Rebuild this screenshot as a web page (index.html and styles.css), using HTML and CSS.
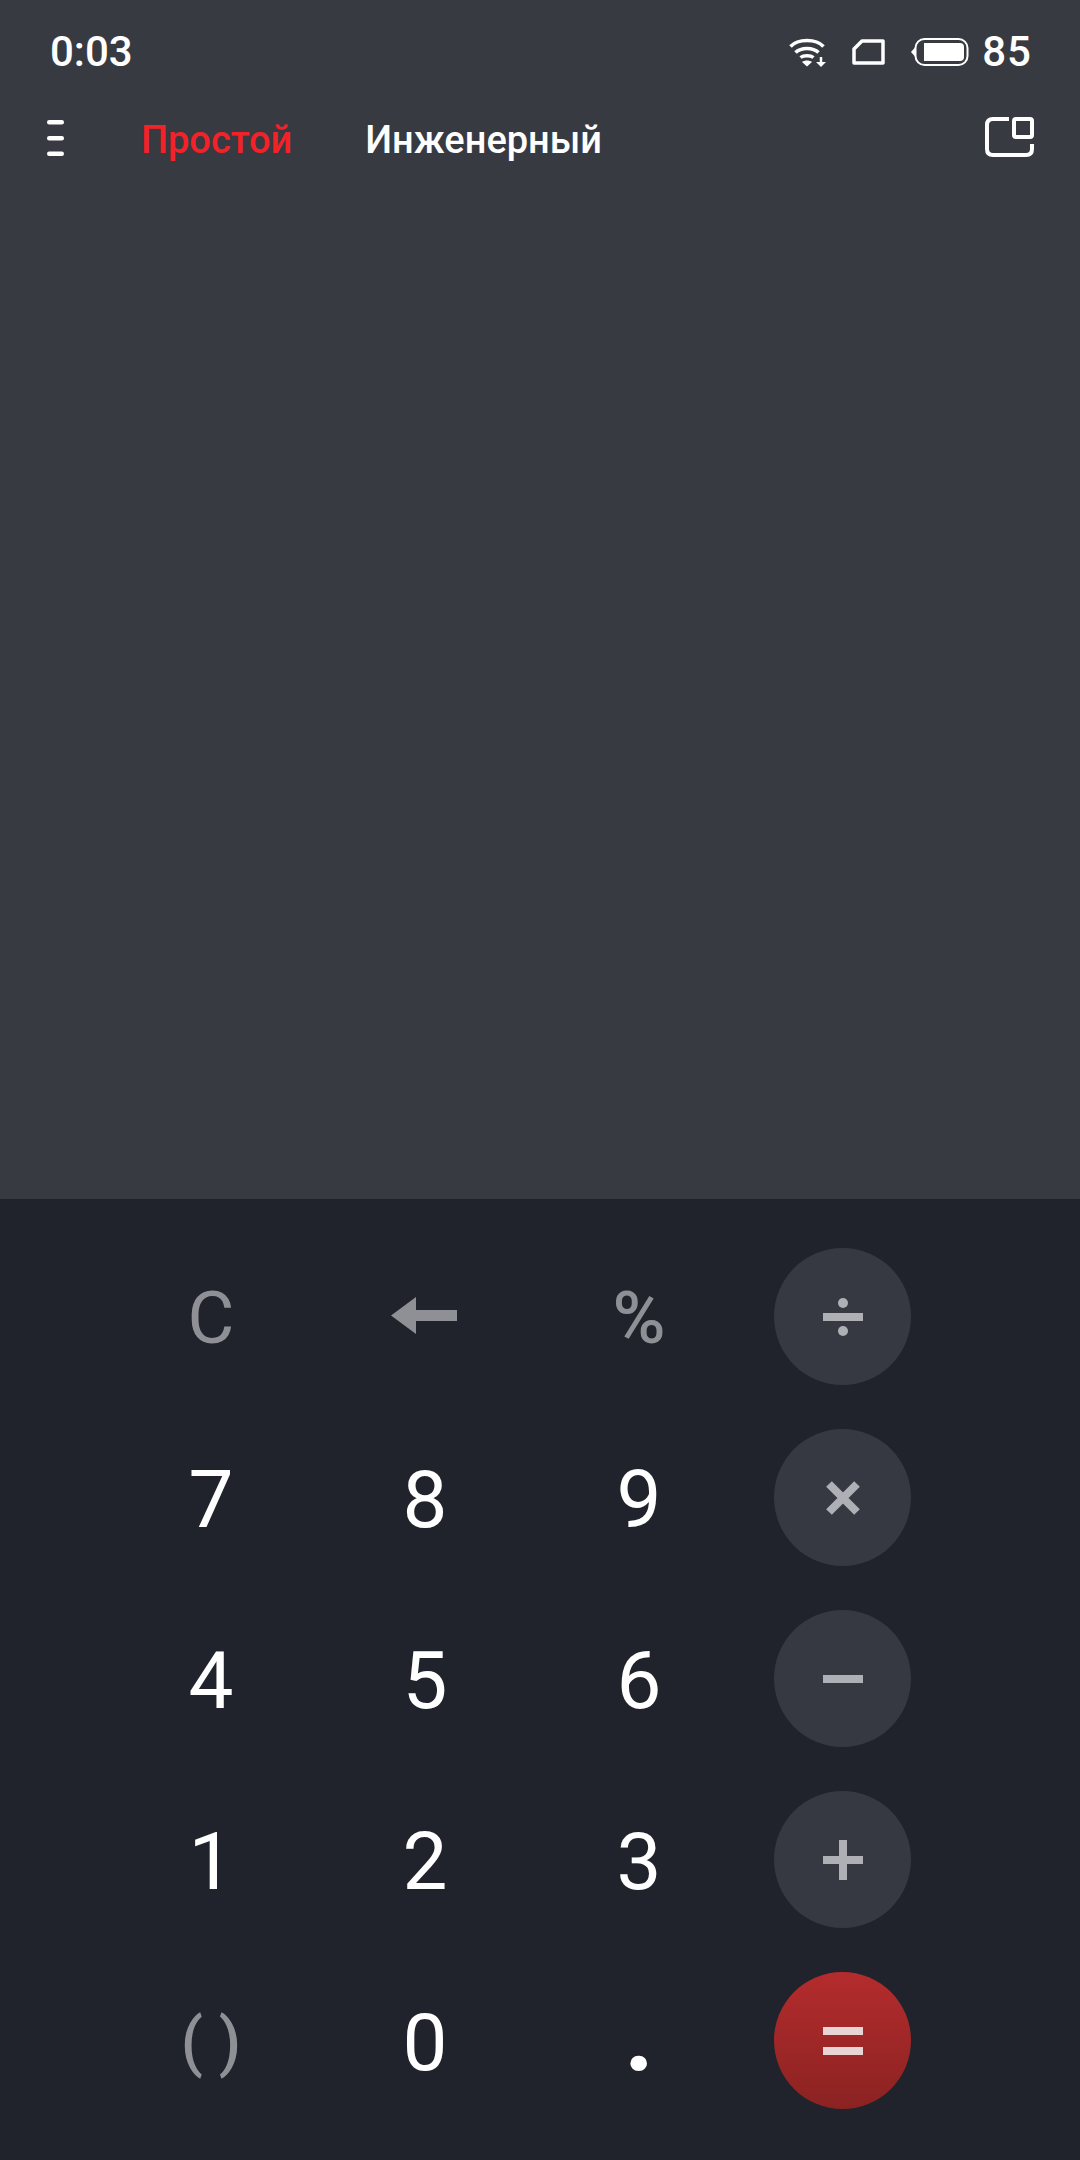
FILE: index.html
```html
<!DOCTYPE html>
<html lang="ru">
<head>
    <meta charset="UTF-8">
    <meta name="viewport" content="width=device-width, initial-scale=1.0">
    <title>Калькулятор</title>
    <link rel="stylesheet" href="styles.css">
</head>
<body>
    <div class="screen">
        <div class="display">
            <div class="status">
                <span class="time">0:03</span>
                <svg class="wifi" width="38" height="30" viewBox="0 0 38 30" fill="none" stroke="#fff" stroke-width="3.500">
                    <path d="M1.500 9.500C9 1.500 27 1.500 34.500 9.500"/>
                    <path d="M6.500 15.500C12 10 24 10 29.500 15.500"/>
                    <path d="M11.500 20.500C14.500 18 21.500 18 24.500 20.500"/>
                    <path d="M18 29.500L13 25C15.500 23 20.500 23 23 25Z" fill="#fff" stroke="none"/>
                    <path d="M32 20V26" stroke-width="2.500"/>
                    <path d="M27 25H37L32 30Z" fill="#fff" stroke="none"/>
                </svg>
                <svg class="sim" width="33" height="26" viewBox="0 0 33 26" fill="none" stroke="#fff" stroke-width="3.500">
                    <path d="M10 2H31V24H2V10Z" stroke-linejoin="round"/>
                </svg>
                <svg class="battery" width="58" height="28" viewBox="0 0 58 28">
                    <path d="M4 9.500L0 14L4 18.500Z" fill="#fff"/>
                    <rect x="4.500" y="1" width="52" height="26" rx="9" fill="none" stroke="#fff" stroke-width="2"/>
                    <path d="M13 5H49Q53 5 53 9V19Q53 23 49 23H13Z" fill="#fff"/>
                </svg>
                <span class="level">85</span>
            </div>
            <div class="tabs">
                <svg class="menu" width="17" height="36" viewBox="0 0 17 36" fill="#fff">
                    <rect y="0" width="17" height="4.500" rx="2.200"/>
                    <rect y="16" width="17" height="4.500" rx="2.200"/>
                    <rect y="31.500" width="17" height="4.500" rx="2.200"/>
                </svg>
                <span class="tab active">Простой</span>
                <span class="tab">Инженерный</span>
                <svg class="pip" width="49" height="40" viewBox="0 0 49 40" fill="none" stroke="#fff" stroke-width="4">
                    <path d="M24 2H8Q2 2 2 8V32Q2 38 8 38H41Q47 38 47 32V27"/>
                    <rect x="29" y="2" width="18" height="18" rx="2"/>
                </svg>
            </div>
        </div>
        <div class="keypad">
            <span class="key muted small">C</span>
            <span class="key muted arrow">
                <svg width="66" height="37" viewBox="0 0 66 37" fill="#8e9095"><path d="M0 18.500L25 0V13H66V24H25V37Z"/></svg>
            </span>
            <span class="key muted small percent">%</span>
            <span class="op">
                <svg width="40" height="40" viewBox="0 0 40 40" fill="#aeb0b6"><circle cx="20" cy="6" r="5"/><rect y="16" width="40" height="8"/><circle cx="20" cy="34" r="5"/></svg>
            </span>

            <span class="key">7</span>
            <span class="key">8</span>
            <span class="key">9</span>
            <span class="op">
                <svg width="40" height="40" viewBox="0 0 40 40" fill="none" stroke="#aeb0b6" stroke-width="8"><path d="M6 6L34 34M34 6L6 34"/></svg>
            </span>

            <span class="key">4</span>
            <span class="key">5</span>
            <span class="key">6</span>
            <span class="op">
                <svg width="40" height="40" viewBox="0 0 40 40" fill="#aeb0b6"><rect y="16" width="40" height="8"/></svg>
            </span>

            <span class="key">1</span>
            <span class="key">2</span>
            <span class="key">3</span>
            <span class="op">
                <svg width="40" height="40" viewBox="0 0 40 40" fill="#aeb0b6"><rect y="16" width="40" height="8"/><rect x="16" width="8" height="40"/></svg>
            </span>

            <span class="key muted parens">( )</span>
            <span class="key">0</span>
            <span class="key dot">.</span>
            <span class="op equals">
                <svg width="40" height="40" viewBox="0 0 40 40" fill="#e8d4d4"><rect y="6" width="40" height="8"/><rect y="26" width="40" height="8"/></svg>
            </span>
        </div>
    </div>
</body>
</html>
```

FILE: styles.css
```css
*{
    box-sizing: border-box;
}
body{
    margin: 0;
    background-color: #20232b;
    font-family: Roboto, "Liberation Sans", sans-serif;
    color: white;
}
.screen{
    width: 1080px;
    height: 2160px;
    display: flex;
    flex-direction: column;
    overflow: hidden;
}
.display{
    height: 1199px;
    background-color: #383a42;
}
.status{
    display: flex;
    align-items: center;
    height: 103px;
    padding-left: 50px;
}
.time{
    font-size: 42px;
    font-weight: 500;
    margin-right: auto;
}
.wifi{
    margin-right: 25px;
}
.sim{
    margin-right: 26px;
}
.battery{
    margin-right: 13px;
}
.level{
    font-size: 42px;
    font-weight: 500;
    margin-right: 48px;
    letter-spacing: 1px;
}
.tabs{
    display: flex;
    align-items: center;
    height: 70px;
    padding-left: 47px;
}
.menu{
    margin-right: 77px;
}
.tab{
    font-size: 38px;
    font-weight: 500;
    margin-right: 73px;
    padding-top: 3px;
}
.tab.active{
    color: #f32228;
}
.pip{
    margin-left: auto;
    margin-right: 46px;
    margin-bottom: 2px;
}
.keypad{
    flex: 1;
    display: grid;
    grid-template-columns: 214px 214px 214px 137px;
    grid-auto-rows: 137px;
    row-gap: 44px;
    padding: 49px 0 0 104px;
}
.key{
    display: flex;
    align-items: center;
    justify-content: center;
    font-size: 80px;
    padding-top: 4px;
}
.key.muted{
    color: #8e9095;
}
.key.small{
    font-size: 72px;
}
.key.percent{
    font-weight: 500;
}
.key.arrow{
    padding: 0 2px 2px 0;
}
.key.parens{
    font-size: 64px;
    font-weight: 500;
}
.key.dot{
    font-size: 104px;
    font-weight: 700;
    padding: 0 0 12px 0;
}
.op{
    display: flex;
    align-items: center;
    justify-content: center;
    margin-left: 28px;
    width: 137px;
    height: 137px;
    border-radius: 50%;
    background-color: #363941;
}
.op.equals{
    background: linear-gradient(#b42c2d, #8b2222);
}
```
